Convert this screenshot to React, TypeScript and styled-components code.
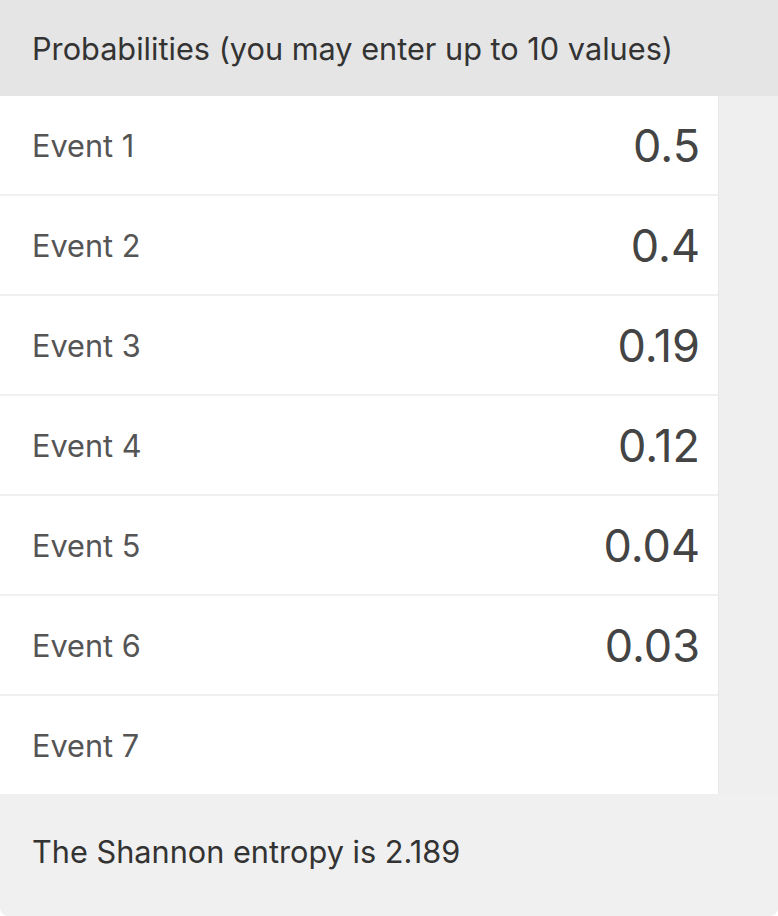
import React from "react";
import styled, { createGlobalStyle } from "styled-components";

const Global = createGlobalStyle`
  html, body { margin: 0; padding: 0; background: #ffffff; }
  body { font-family: Inter, "Liberation Sans", Arial, sans-serif; }
`;

const Panel = styled.div`
  width: 778px;
  height: 916px;
  display: flex;
  flex-direction: column;
  background: #f0f0f0;
  border-bottom-left-radius: 8px;
  border-bottom-right-radius: 8px;
  overflow: hidden;
`;

const Header = styled.div`
  height: 96px;
  display: flex;
  align-items: center;
  padding-left: 32px;
  background: #e5e5e5;
  color: #333333;
  font-size: 30.7px;
`;

const Body = styled.div`
  display: flex;
  background: #efefef;
`;

const List = styled.div`
  width: 718px;
  display: flex;
  flex-direction: column;
  gap: 2px;
  background: #f0f0f0;
  border-right: 1px solid #e8e8e8;
`;

const Row = styled.div`
  height: 98px;
  display: flex;
  align-items: center;
  justify-content: space-between;
  padding: 0 18px 0 32px;
  background: #ffffff;
`;

const Label = styled.span`
  color: #555555;
  font-size: 30.7px;
`;

const Value = styled.span`
  color: #444444;
  font-size: 45px;
`;

const Footer = styled.div`
  flex: 1;
  display: flex;
  align-items: center;
  padding: 0 32px 8px;
  color: #333333;
  font-size: 30.7px;
`;

const rows: { label: string; value: string }[] = [
  { label: "Event 1", value: "0.5" },
  { label: "Event 2", value: "0.4" },
  { label: "Event 3", value: "0.19" },
  { label: "Event 4", value: "0.12" },
  { label: "Event 5", value: "0.04" },
  { label: "Event 6", value: "0.03" },
  { label: "Event 7", value: "" },
];

export default function App() {
  return (
    <>
      <Global />
      <Panel>
        <Header>Probabilities (you may enter up to 10 values)</Header>
        <Body>
          <List>
            {rows.map((r) => (
              <Row key={r.label}>
                <Label>{r.label}</Label>
                <Value>{r.value}</Value>
              </Row>
            ))}
          </List>
        </Body>
        <Footer>The Shannon entropy is 2.189</Footer>
      </Panel>
    </>
  );
}
